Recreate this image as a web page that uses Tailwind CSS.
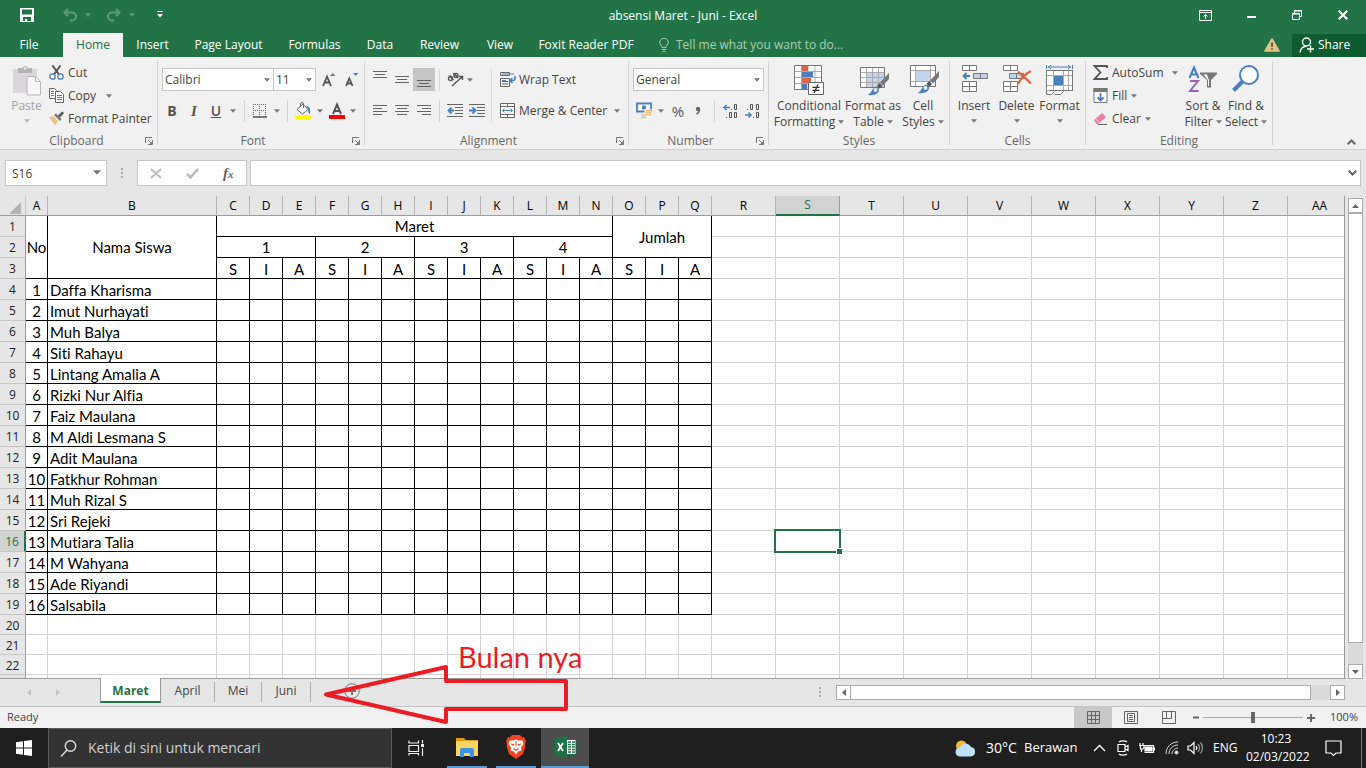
<!DOCTYPE html>
<html lang="id">
<head>
<meta charset="utf-8">
<title>absensi Maret - Juni - Excel</title>
<script src="https://cdn.jsdelivr.net/npm/@tailwindcss/browser@4"></script>
</head>
<body class="flex h-screen flex-col overflow-hidden bg-[#e6e6e6] font-['Open_Sans',sans-serif] text-xs text-[#444]">

<svg class="hidden" aria-hidden="true">
  <symbol id="dd" viewBox="0 0 7 4"><path d="M0 0h7L3.500 4z" fill="currentColor"/></symbol>
  <symbol id="launch" viewBox="0 0 8 8"><path d="M0.5 6V0.5H7M3 3l3.500 3.500M7.500 3v4.500H3" fill="none" stroke="#777"/><path d="M7.500 4v3.500H4z" fill="#777"/></symbol>
</svg>

<!-- Title bar -->
<header class="shrink-0 bg-[#227447] text-white">
  <div class="relative flex h-[33px] items-center justify-between">
    <div class="flex h-full items-center pl-5 pb-1">
      <button aria-label="Save" class="w-[14px]"><svg width="14" height="14" viewBox="0 0 14 14" fill="#fff"><path fill-rule="evenodd" d="M0 0h14v14H0zM2 1.500v5h10v-5zM3 9v4h2v-2h2v2h4V9z"/></svg></button>
      <button aria-label="Undo" class="ml-[29px]"><svg width="14" height="14" viewBox="0 0 14 14" fill="none" stroke="#5c9c79" stroke-width="2"><path d="M5 1L1.500 4.500 5 8M2 4.500h7a4 4 0 0 1 0 8H7"/></svg></button>
      <svg class="ml-2 text-[#5c9c79]" width="6" height="4"><use href="#dd"/></svg>
      <button aria-label="Redo" class="ml-4"><svg width="14" height="14" viewBox="0 0 14 14" fill="none" stroke="#5c9c79" stroke-width="2"><path d="M9 1l3.500 3.500L9 8M12 4.500H5a4 4 0 0 0 0 8h2"/></svg></button>
      <svg class="ml-2 text-[#5c9c79]" width="6" height="4"><use href="#dd"/></svg>
      <button aria-label="Customize Quick Access Toolbar" class="ml-[22px]"><svg width="6" height="7" viewBox="0 0 6 7" fill="#fff"><path d="M0 0h6v1H0zM0 3h6L3 6.500z"/></svg></button>
    </div>
    <h1 class="absolute inset-x-0 top-2 mx-auto w-40 text-center leading-4 whitespace-nowrap">absensi Maret - Juni - Excel</h1>
    <div class="relative flex h-full items-center pb-[3px]">
      <button aria-label="Ribbon Display Options" class="flex w-[46px] justify-center"><svg width="13" height="11" viewBox="0 0 13 11" fill="none" stroke="#fff"><path d="M.5.5h12v10H.5zM.5 2.500h12M6.500 9V4.500M4.500 6.500l2-2 2 2"/></svg></button>
      <button aria-label="Minimize" class="flex w-[46px] justify-center pt-[3px]"><svg width="9" height="2"><path d="M0 0h9v2H0z" fill="#fff"/></svg></button>
      <button aria-label="Restore" class="flex w-[46px] justify-center"><svg width="10" height="10" viewBox="0 0 10 10" fill="none" stroke="#fff"><path d="M.5 4h7v5.500h-7zM0 3.500h8M2.500 3V1h7v5.500H8M2 .5h8"/></svg></button>
      <button aria-label="Close" class="flex w-[46px] justify-center"><svg width="10" height="10" viewBox="0 0 10 10" stroke="#fff" stroke-width="2"><path d="M.7.7l8.600 8.600M9.300.7L.7 9.300"/></svg></button>
    </div>
  </div>
  <nav class="flex h-6 items-stretch">
    <button class="mr-[5px] w-[58px]">File</button>
    <button class="w-[60px] bg-[#f1f1f1] text-[#217346]">Home</button>
    <button class="w-[59px]">Insert</button>
    <button class="w-[93px]">Page Layout</button>
    <button class="w-[79px]">Formulas</button>
    <button class="w-[52px]">Data</button>
    <button class="w-[67px]">Review</button>
    <button class="w-[54px]">View</button>
    <button class="w-[118px] whitespace-nowrap">Foxit Reader PDF</button>
    <span class="ml-[14px] flex items-center"><svg width="10" height="14" viewBox="0 0 10 14" fill="none" stroke="#a9cdb9"><path d="M3 9.500C3 7.500.8 7 .8 4.500a4.200 4.200 0 0 1 8.400 0C9.200 7 7 7.500 7 9.500zM3 11.500h4M3.500 13.300h3"/></svg></span>
    <input aria-label="Tell me" placeholder="Tell me what you want to do..." class="ml-[7px] w-44 bg-transparent placeholder:text-[#a9cdb9] outline-none">
    <div class="ml-auto flex items-center">
      <svg class="mr-3" width="16" height="14" viewBox="0 0 16 14"><path d="M8 1L15 13H1z" fill="#e8c282" stroke="#e8c282" stroke-width="1.500" stroke-linejoin="round"/><path d="M7.200 4.500h1.600v4.500H7.200zM7.200 10.200h1.600v1.600H7.200z" fill="#444"/></svg>
      <button class="flex h-[23px] w-[74px] items-center gap-[3px] bg-[#0e5c2f] pl-[7px]"><svg width="16" height="16" viewBox="0 0 16 16" fill="none" stroke="#fff" stroke-width="1.400"><circle cx="7.500" cy="5" r="4"/><path d="M1 15.500C1.500 11 4.500 9.500 7.500 9.300M11.500 8.500v7M8 12h7"/></svg>Share</button>
    </div>
  </nav>
</header>

<!-- Ribbon -->
<section aria-label="Ribbon" class="relative flex h-[93px] shrink-0 border-b border-[#d2d0d0] bg-[#f1f1f1] pt-1 pb-1 leading-4">
  <!-- Clipboard -->
  <div class="flex w-[158px] flex-col justify-between border-r border-[#d4d4d4]">
    <div class="flex h-[69px] pl-[6px]">
      <button class="flex w-[38px] flex-col items-center pt-1 pl-[3px] text-[#a3a3a3]">
        <svg width="29" height="31" viewBox="0 0 29 31"><path d="M1 4h24v24H1z" fill="#dcd6da"/><path d="M6 3h4.500a2.600 2.600 0 0 1 5 0H20v5H6z" fill="#b3b1b2"/><circle cx="13" cy="3.500" r="1.200" fill="#f1f1f1"/><path d="M15 11.500h8.500l5 5V30H15z" fill="#f7f5f8" stroke="#b9b5ba"/><path d="M23.500 11.500v5h5" fill="none" stroke="#b9b5ba"/></svg>
        <span class="mt-[2px]">Paste</span>
        <svg class="mt-[5px] text-[#b5b5b5]" width="6" height="4"><use href="#dd"/></svg>
      </button>
      <div class="flex flex-col pl-[5px] whitespace-nowrap">
        <button class="flex h-[23px] items-center gap-[4px]"><svg width="15" height="15" viewBox="0 0 15 15" fill="none"><path d="M3.500.5l6.500 9M11.500.5L5 9.500" stroke="#555" stroke-width="2"/><circle cx="3.500" cy="11.500" r="2.700" stroke="#4a7fba" stroke-width="1.300"/><circle cx="11.500" cy="11.500" r="2.700" stroke="#4a7fba" stroke-width="1.300"/></svg>Cut</button>
        <button class="flex h-[23px] items-center gap-[4px]"><svg width="15" height="15" viewBox="0 0 15 15"><g fill="#fff" stroke="#666"><path d="M.5.5h5l2 2v8h-7z"/><path d="M6.500 3.500h5l3 3v8h-8z"/></g><path d="M2 3.500h3M2 5.500h3M2 7.500h3M8 7.500h5M8 9.500h5M8 11.500h5" stroke="#4a7fba"/></svg>Copy<svg class="ml-[6px] text-[#777]" width="6" height="4"><use href="#dd"/></svg></button>
        <button class="flex h-[23px] items-center gap-[4px]"><svg width="15" height="15" viewBox="0 0 15 15"><path d="M0 6l4-1 5 5-3 4.500z" fill="#edc285"/><path d="M5 4l6 6 1.500-2-5.500-5.500z" fill="#777"/><path d="M9 4.500l4-4L15 2l-4 4.500z" fill="#555"/></svg>Format Painter</button>
      </div>
    </div>
    <div class="flex items-center justify-center pr-1 leading-2 text-[#666]"><span class="ml-auto pl-2">Clipboard</span><button aria-label="Clipboard options" class="ml-auto"><svg width="8" height="8"><use href="#launch"/></svg></button></div>
  </div>
  <!-- Font -->
  <div class="flex w-[207px] flex-col justify-between border-r border-[#d4d4d4]">
    <div class="pt-[7px] pl-1">
      <div class="flex h-[23px]">
        <div class="relative w-[112px]"><select aria-label="Font" class="h-full w-full appearance-none border border-[#c6c6c6] bg-white pl-[2px] text-[#444]"><option>Calibri</option></select><svg class="absolute top-[10px] right-1 text-[#777]" width="6" height="4"><use href="#dd"/></svg></div>
        <div class="relative -ml-px w-[43px]"><select aria-label="Font size" class="h-full w-full appearance-none border border-[#c6c6c6] bg-white pl-[2px] text-[#444]"><option>11</option></select><svg class="absolute top-[10px] right-1 text-[#777]" width="6" height="4"><use href="#dd"/></svg></div>
        <button aria-label="Increase font size" class="ml-[6px] flex w-[14px] items-center"><svg width="14" height="15" viewBox="0 0 14 15"><path d="M1 14L5 4.500 9 14M2.500 10.500h5" fill="none" stroke="#555" stroke-width="1.800"/><path d="M8 4h5.500L10.700 1z" fill="#4a7fba"/></svg></button>
        <button aria-label="Decrease font size" class="ml-[9px] flex w-[14px] items-center"><svg width="14" height="15" viewBox="0 0 14 15"><path d="M1 14L4.300 6.500 7.600 14M2.200 11.500h4.200" fill="none" stroke="#555" stroke-width="1.800"/><path d="M8 1h5.500L10.700 4z" fill="#4a7fba"/></svg></button>
      </div>
      <div class="mt-2 flex h-[23px] items-center text-[#777]">
        <button class="w-[20px] text-sm font-bold text-[#555]">B</button>
        <button class="w-[24px] font-['Liberation_Serif',serif] text-[15px] font-bold text-[#555] italic">I</button>
        <button class="w-[20px] text-sm font-semibold text-[#555] underline">U</button>
        <svg class="ml-1" width="6" height="4"><use href="#dd"/></svg>
        <span class="mx-2 h-[22px] w-px bg-[#d4d4d4]"></span>
        <button aria-label="Borders"><svg width="14" height="14" viewBox="0 0 14 14"><path d="M0 .5h14M0 6.500h14M.5 0v13M6.500 0v13M12.500 0v13" fill="none" stroke="#666" stroke-dasharray="1 1"/><path d="M0 13h14" stroke="#555" stroke-width="1.500"/></svg></button>
        <svg class="ml-[7px]" width="6" height="4"><use href="#dd"/></svg>
        <span class="mx-[7px] h-[22px] w-px bg-[#d4d4d4]"></span>
        <button aria-label="Fill color"><svg width="17" height="17" viewBox="0 0 17 17"><path d="M2 7.500L8 2l5 5.500L7.500 12z" fill="#fff" stroke="#666"/><path d="M5.500 5V2a1.500 1.500 0 0 1 3 0v4" fill="none" stroke="#666"/><path d="M11 4c4 0 4.500 3 4 8-2-1-2-4-2-5z" fill="#4a7fba"/><path d="M0 13h16v4H0z" fill="#ff0"/></svg></button>
        <svg class="ml-[5px]" width="6" height="4"><use href="#dd"/></svg>
        <button aria-label="Font color" class="ml-[6px]"><svg width="16" height="17" viewBox="0 0 16 17"><path d="M4 12L8 2.500 12 12M5.500 9h5" fill="none" stroke="#555" stroke-width="2"/><path d="M0 13h16v4H0z" fill="red"/></svg></button>
        <svg class="ml-[5px]" width="6" height="4"><use href="#dd"/></svg>
      </div>
    </div>
    <div class="flex items-center pr-1 leading-2 text-[#666]"><span class="mx-auto pr-1">Font</span><button aria-label="Font options"><svg width="8" height="8"><use href="#launch"/></svg></button></div>
  </div>
  <!-- Alignment -->
  <div class="flex w-[264px] flex-col justify-between border-r border-[#d4d4d4]">
    <div class="flex pt-[7px] pl-1">
      <div class="w-[123px] border-r border-[#dcdcdc]">
        <div class="flex h-[23px] items-center">
          <button aria-label="Top align" class="flex h-full w-[22px] items-start justify-center pt-[3px]"><svg width="14" height="8" stroke="#666"><path d="M0 .5h14M2 3.500h10M0 6.500h14"/></svg></button>
          <button aria-label="Middle align" class="flex h-full w-[22px] items-center justify-center"><svg width="14" height="8" stroke="#666"><path d="M0 .5h14M2 3.500h10M0 6.500h14"/></svg></button>
          <button aria-label="Bottom align" class="flex h-full w-[22px] items-end justify-center bg-[#c5c5c5] pb-[3px]"><svg width="14" height="8" stroke="#666"><path d="M0 .5h14M2 3.500h10M0 6.500h14"/></svg></button>
          <span class="mx-1 h-[22px] w-px bg-[#d4d4d4]"></span>
          <button aria-label="Orientation" class="flex items-center gap-[3px] pl-[3px] text-[#777]"><svg width="17" height="15" viewBox="0 0 17 15" fill="none" stroke="#555" stroke-width="1.400"><circle cx="3.500" cy="6.500" r="2"/><path d="M2.500 3.500l4 4.500M6.500 1l4.500 5"/><circle cx="9" cy="3.500" r="2"/><path d="M5 14l10-9M12 4.500h3.500V8"/></svg><svg width="6" height="4"><use href="#dd"/></svg></button>
        </div>
        <div class="mt-2 flex h-[23px] items-center">
          <button aria-label="Align left" class="flex w-[22px] justify-center"><svg width="14" height="11" stroke="#666"><path d="M0 .5h14M0 3.500h9M0 6.500h14M0 9.500h9"/></svg></button>
          <button aria-label="Center" class="flex w-[22px] justify-center"><svg width="14" height="11" stroke="#666"><path d="M0 .5h14M2 3.500h10M0 6.500h14M2 9.500h10"/></svg></button>
          <button aria-label="Align right" class="flex w-[22px] justify-center"><svg width="14" height="11" stroke="#666"><path d="M0 .5h14M5 3.500h9M0 6.500h14M5 9.500h9"/></svg></button>
          <span class="mx-1 h-[22px] w-px bg-[#d4d4d4]"></span>
          <button aria-label="Decrease indent" class="flex w-[22px] justify-center"><svg width="16" height="14" fill="none" stroke="#666"><path d="M0 .5h16M8 3.500h8M8 6.500h8M8 9.500h8M0 12.500h16"/><path d="M7 6.500H1.500M4.500 3.500l-3 3 3 3" stroke="#4a7fba" stroke-width="1.800"/></svg></button>
          <button aria-label="Increase indent" class="flex w-[22px] justify-center"><svg width="16" height="14" fill="none" stroke="#666"><path d="M0 .5h16M8 3.500h8M8 6.500h8M8 9.500h8M0 12.500h16"/><path d="M0 6.500h6M3.500 3.500l3 3-3 3" stroke="#4a7fba" stroke-width="1.800"/></svg></button>
        </div>
      </div>
      <div class="pl-2 whitespace-nowrap">
        <button class="flex h-[23px] items-center gap-[3px]"><svg width="16" height="16" viewBox="0 0 16 16" fill="none" stroke="#666"><path d="M.5.5h9v3h-9zM.5 6.500h9v8h-9zM2 9.500h6M2 12h6"/><path d="M2 2h12M2 8.500h4" stroke="#4a7fba"/><path d="M15 4v2.500a2 2 0 0 1-2 2h-2.500M12.500 6l-2.500 2.500 2.500 2.500" stroke="#4a7fba" stroke-width="1.500"/></svg>Wrap Text</button>
        <button class="mt-2 flex h-[23px] items-center gap-[4px]"><svg width="15" height="15" viewBox="0 0 15 15" fill="#fff" stroke="#666"><path d="M.5.5h14v14H.5zM.5 3.500h14M.5 11.500h14M7.500.5v3M7.500 11.500v3"/><path d="M2.500 7.500h10M4.500 5.500l-2 2 2 2M10.500 5.500l2 2-2 2" fill="none" stroke="#4a7fba"/></svg>Merge &amp; Center<svg class="ml-[3px] text-[#777]" width="6" height="4"><use href="#dd"/></svg></button>
      </div>
    </div>
    <div class="flex items-center pr-1 leading-2 text-[#666]"><span class="mx-auto pr-1">Alignment</span><button aria-label="Alignment options"><svg width="8" height="8"><use href="#launch"/></svg></button></div>
  </div>
  <!-- Number -->
  <div class="flex w-[140px] flex-col justify-between border-r border-[#d4d4d4]">
    <div class="pt-[7px] pl-1">
      <div class="relative h-[23px] w-[131px]"><select aria-label="Number format" class="h-full w-full appearance-none border border-[#c6c6c6] bg-white pl-[2px] text-[#444]"><option>General</option></select><svg class="absolute top-[10px] right-1 text-[#777]" width="6" height="4"><use href="#dd"/></svg></div>
      <div class="mt-2 flex h-[23px] items-center pl-[3px] text-[#777]">
        <button aria-label="Accounting format"><svg width="17" height="17" viewBox="0 0 17 17"><path d="M1 1.500h14v8H1z" fill="#fff" stroke="#4a7fba" stroke-width="1.800"/><circle cx="8" cy="5.500" r="2.200" fill="#4a7fba"/><path d="M8.500 7h7v8h-4v2h-7v-5h4z" fill="#f1f1f1"/><path d="M10 8.500h5M10 10.500h5M10 12.500h5M5 13h5M5 15.500h5" stroke="#eabf80" stroke-width="1.600"/></svg></button>
        <svg class="ml-[5px]" width="6" height="4"><use href="#dd"/></svg>
        <button class="ml-[5px] w-[18px] text-[15px] text-[#555]">%</button>
        <button aria-label="Comma style" class="ml-[8px]"><svg width="6" height="9" viewBox="0 0 6 9"><circle cx="3" cy="3" r="2.200" fill="#666"/><path d="M4.500 3c0 3-1 4-3 5" fill="none" stroke="#666" stroke-width="1.500"/></svg></button>
        <span class="mr-2 ml-[13px] h-[22px] w-px bg-[#d4d4d4]"></span>
        <button aria-label="Increase decimal"><svg width="15" height="14" viewBox="0 0 15 14" fill="none" stroke="#555"><path d="M7 3.500H1M3.500 1L1 3.500 3.500 6" stroke="#4a7fba" stroke-width="1.500"/><path d="M8 5.500h1M11.500 .5h2v5h-2zM3 13.500h1M6.500 8.500h2v5h-2zM11.500 8.500h2v5h-2z"/></svg></button>
        <button aria-label="Decrease decimal" class="ml-[7px]"><svg width="15" height="14" viewBox="0 0 15 14" fill="none" stroke="#555"><path d="M0 11h6M3.500 8.500L6 11l-2.500 2.500" stroke="#4a7fba" stroke-width="1.500"/><path d="M2 5.500h1M5.500 .5h2v5h-2zM11.500 .5h2v5h-2zM8 13.500h1M11.500 8.500h2v5h-2z"/></svg></button>
      </div>
    </div>
    <div class="flex items-center pr-1 leading-2 text-[#666]"><span class="mx-auto pr-1">Number</span><button aria-label="Number options"><svg width="8" height="8"><use href="#launch"/></svg></button></div>
  </div>
  <!-- Styles -->
  <div class="flex w-[181px] flex-col justify-between border-r border-[#d4d4d4]">
    <div class="flex pt-1 pl-[5px] whitespace-nowrap">
      <button class="flex w-[70px] flex-col items-center">
        <svg class="mb-px" width="30" height="32" viewBox="0 0 30 32"><path d="M.5.5h27v24H.5z" fill="#fff"/><path d="M.5 6.500h27M.5 12.500h27M.5 18.500h27M7.500.5v24M14 .5v24M21 .5v24" stroke="#aaa"/><path d="M.5.5h27v24H.5z" fill="none" stroke="#777"/><path d="M8 1h6v5H8zM8 13h9v5H8z" fill="#dd6444"/><path d="M8 7h11v5H8zM8 19h5v5H8z" fill="#4a7fba"/><path d="M14.500 17.500h15v12h-15z" fill="#fff" stroke="#666"/><path d="M18.500 22.300h7M18.500 25.300h7M24 19.500l-4 8.500" stroke="#333" stroke-width="1.300"/></svg>
        <span>Conditional</span><span class="flex items-center gap-[3px]">Formatting<svg class="text-[#777]" width="6" height="4"><use href="#dd"/></svg></span>
      </button>
      <button class="flex w-[58px] flex-col items-center">
        <svg class="mb-px" width="32" height="32" viewBox="0 0 32 32"><path d="M3.500 2.500h24v20h-24z" fill="#fff"/><path d="M10 8h17v14H10z" fill="#c1d4ea"/><path d="M3.500 7.500h24M3.500 12.500h24M3.500 17.500h24M9.500 2.500v20M15.500 2.500v20M21.500 2.500v20" stroke="#aaa"/><path d="M3.500 2.500h24v20h-24z" fill="none" stroke="#777"/><path d="M32 8l-9 9.500 3 3L32 14z" fill="#777"/><path d="M22.500 18l-2.500 3 2.500 2.500 3-2.500z" fill="#555"/><path d="M10 30c5-1 4-6 8-8 3-1 5 2 3.500 5-2 3-7 3.500-11.500 3z" fill="#4a7fba"/><circle cx="18.500" cy="25" r="2" fill="#e8f0fa"/></svg>
        <span>Format as</span><span class="flex items-center gap-[3px]">Table<svg class="text-[#777]" width="6" height="4"><use href="#dd"/></svg></span>
      </button>
      <button class="flex w-[42px] flex-col items-center">
        <svg class="mb-px" width="32" height="32" viewBox="0 0 32 32"><path d="M3.500.5h25v21h-25z" fill="#fff"/><path d="M3.500 5.500h25M3.500 16.500h25M8.500.5v21M23.500.5v21" stroke="#aaa"/><path d="M9 6h14v10H9z" fill="#c1d4ea"/><path d="M3.500.5h25v21h-25z" fill="none" stroke="#777"/><path d="M32 6l-9 9.500 3 3L32 12z" fill="#777"/><path d="M22 16l-2.500 3 2.500 2.500 3-2.500z" fill="#555"/><path d="M10 28c5-1 4-6 8-8 3-1 5 2 3.500 5-2 3-7 3.500-11.500 3z" fill="#4a7fba"/><circle cx="18.500" cy="23" r="2" fill="#e8f0fa"/></svg>
        <span>Cell</span><span class="flex items-center gap-[3px]">Styles<svg class="text-[#777]" width="6" height="4"><use href="#dd"/></svg></span>
      </button>
    </div>
    <span class="text-center leading-2 text-[#666]">Styles</span>
  </div>
  <!-- Cells -->
  <div class="flex w-[136px] flex-col justify-between border-r border-[#d4d4d4]">
    <div class="flex pt-1 pl-[3px]">
      <button class="flex w-[42px] flex-col items-center">
        <svg class="mb-px" width="27" height="32" viewBox="0 0 27 32" fill="#fff" stroke="#777"><path d="M1.500.5h14v5h-14zM8.500.5v5M1.500 16.500h14v10h-14zM8.500 16.500v10M1.500 21.500h14"/><path d="M12.500 8.500h14v5h-14zM19.500 8.500v5" fill="#c1d4ea"/><path d="M9 11H2.500M5.500 8l-3 3 3 3" fill="none" stroke="#4a7fba" stroke-width="1.800"/></svg>
        <span>Insert</span><svg class="mt-[5px] text-[#777]" width="6" height="4"><use href="#dd"/></svg>
      </button>
      <button class="flex w-[43px] flex-col items-center">
        <svg class="mb-px" width="30" height="32" viewBox="0 0 30 32" fill="#fff" stroke="#777"><path d="M1.500.5h14v5h-14zM8.500.5v5M1.500 16.500h14v10h-14zM8.500 16.500v10M1.500 21.500h14"/><path d="M7.500 8.500h14v5h-14zM14.500 8.500v5" fill="#c1d4ea"/><path d="M16 6.500c4 4 8 7 13 12M29 6c-6 3-10 7-13 13" fill="none" stroke="#dd6444" stroke-width="2.200"/></svg>
        <span>Delete</span><svg class="mt-[5px] text-[#777]" width="6" height="4"><use href="#dd"/></svg>
      </button>
      <button class="flex w-[43px] flex-col items-center">
        <svg class="mb-px" width="30" height="32" viewBox="0 0 30 32" fill="none" stroke="#777"><path d="M1.500 5.500h26v20h-26z" fill="#fff"/><path d="M1.500 10.500h26M1.500 20.500h26M8.500 5.500v20M18.500 5.500v20M23.500 5.500v20" stroke="#aaa"/><path d="M1.500 5.500h26v20h-26z"/><path d="M9 11h9v9H9z" fill="#4a7fba" stroke="none"/><path d="M1.500 25.500v4h5l3-3M9.500 29.500h6l3-3" fill="#fff"/><path d="M1.500 0v4M27.500 0v4M3 2h23M6 0L3.500 2 6 4M23 0l2.500 2L23 4" stroke="#4a7fba"/></svg>
        <span>Format</span><svg class="mt-[5px] text-[#777]" width="6" height="4"><use href="#dd"/></svg>
      </button>
    </div>
    <span class="text-center leading-2 text-[#666]">Cells</span>
  </div>
  <!-- Editing -->
  <div class="flex w-[187px] flex-col justify-between border-r border-[#d4d4d4]">
    <div class="flex h-[69px] pl-[7px] whitespace-nowrap">
      <div class="flex w-[89px] flex-col">
        <button class="flex h-[23px] items-center gap-[4px]"><svg width="15" height="15" viewBox="0 0 15 15" fill="none" stroke="#555" stroke-width="1.800"><path d="M14 3V1H1.500l6 6.500-6 6.500H14v-2"/></svg>AutoSum<svg class="ml-1 text-[#777]" width="6" height="4"><use href="#dd"/></svg></button>
        <button class="flex h-[23px] items-center gap-[4px]"><svg width="15" height="15" viewBox="0 0 15 15"><path d="M1 .5h13v14H1z" fill="#fff" stroke="#777"/><path d="M.5 0h14v4H.5z" fill="#777"/><path d="M7.500 5v7.500M4.500 9.500l3 3 3-3" fill="none" stroke="#4a7fba" stroke-width="1.800"/></svg>Fill<svg class="text-[#777]" width="6" height="4"><use href="#dd"/></svg></button>
        <button class="flex h-[23px] items-center gap-[4px]"><svg width="15" height="14" viewBox="0 0 15 14"><path d="M1 8l8-7 4 4-7.500 7H3.500z" fill="#e8829a"/><path d="M2.500 6.500l4.500 5" stroke="#f6d5dc"/><path d="M5 12.500h9" stroke="#666"/></svg>Clear<svg class="text-[#777]" width="6" height="4"><use href="#dd"/></svg></button>
      </div>
      <button class="flex w-[42px] flex-col items-center pt-1">
        <svg class="mb-px" width="30" height="32" viewBox="0 0 30 32" fill="none"><path d="M1.500 13L6 2.500 10.500 13M3 9.500h6" stroke="#4a7fba" stroke-width="2"/><path d="M2 16h8L2 26h8.500" stroke="#9a63b5" stroke-width="2"/><path d="M12 7.500h17v1.500l-6 6v7.500h-4V15L12 9z" fill="#777"/><path d="M15.500 9.500h3.500l2 5.500v6h-1v-6z" fill="#fff"/></svg>
        <span>Sort &amp;</span><span class="flex items-center gap-[3px]">Filter<svg class="text-[#777]" width="6" height="4"><use href="#dd"/></svg></span>
      </button>
      <button class="flex w-[44px] flex-col items-center pt-1">
        <svg class="mb-px" width="28" height="32" viewBox="0 0 28 32"><path d="M11 16L1.500 25.500" stroke="#4a7fba" stroke-width="4"/><circle cx="17" cy="10" r="9" fill="#fff" stroke="#4a7fba" stroke-width="2"/></svg>
        <span>Find &amp;</span><span class="flex items-center gap-[3px]">Select<svg class="text-[#777]" width="6" height="4"><use href="#dd"/></svg></span>
      </button>
    </div>
    <span class="text-center leading-2 text-[#666]">Editing</span>
  </div>
  <button aria-label="Collapse the Ribbon" class="mt-auto mr-[10px] ml-auto"><svg width="9" height="6" fill="none" stroke="#666" stroke-width="2"><path d="M.7 5.300L4.500 1.500l3.800 3.800"/></svg></button>
</section>

<!-- Formula bar -->
<section aria-label="Formula bar" class="flex h-[46px] shrink-0 items-start px-[5px] pt-[10px]">
  <div class="relative h-[26px] w-[102px]"><input aria-label="Name Box" value="S16" class="h-full w-full border border-[#c6c6c6] bg-white pl-[6px]"><svg class="absolute top-[10px] right-[6px] text-[#777]" width="8" height="5"><use href="#dd"/></svg></div>
  <svg class="mt-2 ml-[14px]" width="2" height="11" fill="#aaa"><path d="M0 0h2v2H0zM0 4h2v2H0zM0 8h2v2H0z"/></svg>
  <div class="ml-[14px] flex h-[26px] w-[110px] items-center border border-[#c6c6c6] bg-white pl-3">
    <button aria-label="Cancel"><svg width="12" height="11" stroke="#bbb" stroke-width="1.800"><path d="M1 1l10 9M11 1L1 10"/></svg></button>
    <button aria-label="Enter" class="ml-6"><svg width="13" height="11" fill="none" stroke="#bbb" stroke-width="2.500"><path d="M1 6l3.500 3.500L12 1"/></svg></button>
    <button class="ml-6 font-['Liberation_Serif',serif] text-[15px] leading-4 font-bold text-[#666] italic">f<span class="text-[11px]">x</span></button>
  </div>
  <div class="relative ml-[3px] h-[26px] flex-1"><input aria-label="Formula" class="h-full w-full border border-[#c6c6c6] bg-white px-2"><svg class="absolute top-[10px] right-1" width="9" height="6" fill="none" stroke="#666" stroke-width="2"><path d="M.7.7l3.800 3.800L8.300.7"/></svg></div>
</section>

<!-- Sheet -->
<main class="flex min-h-0 flex-1">
  <div class="min-w-0 flex-1 overflow-hidden border-r border-[#9b9b9b]">
    <div class="h-full bg-white">
      <table class="w-[1352px] table-fixed border-separate border-spacing-0 bg-white text-center">
        <colgroup id="cols"></colgroup>
        <thead><tr id="head"></tr></thead>
        <tbody id="rows" class="font-[Lato,sans-serif] text-[15px] text-black [font-variant-ligatures:none]"></tbody>
      </table>
    </div>
  </div>
  <div class="flex w-[21px] flex-col items-start pt-[2px] pl-[3px]">
    <button aria-label="Scroll up" class="flex h-[15px] w-[15px] items-center justify-center border border-[#ababab] bg-white text-[#666]"><svg class="rotate-180" width="7" height="4"><use href="#dd"/></svg></button>
    <div class="flex w-[15px] flex-1 flex-col bg-[#dadada]"><div class="flex-1 border border-[#ababab] bg-white"></div><div class="h-[21px]"></div></div>
    <button aria-label="Scroll down" class="-mb-px flex h-[15px] w-[15px] items-center justify-center border border-[#ababab] bg-white text-[#666]"><svg width="7" height="4"><use href="#dd"/></svg></button>
  </div>
</main>

<!-- Sheet tabs -->
<section aria-label="Sheet tabs" class="relative flex h-[29px] shrink-0 border-b border-[#c6c6c6]">
  <div class="absolute top-0 right-5 left-0 h-px bg-[#9b9b9b]"></div>
  <div class="flex w-[100px] items-center gap-[25px] pl-[27px]">
    <svg width="4" height="7"><path d="M4 0v7L0 3.500z" fill="#c3c3c3"/></svg>
    <svg width="4" height="7"><path d="M0 0v7l4-3.500z" fill="#c3c3c3"/></svg>
  </div>
  <div class="relative flex h-[25px]">
    <button class="w-[61px] border-x border-b-2 border-x-[#9b9b9b] border-b-[#217346] bg-white pt-[2px] font-bold text-[#217346]">Maret</button>
    <button class="w-[53px] pt-px">April</button><span class="mt-1 h-5 w-px bg-[#ababab]"></span>
    <button class="w-[46px] pt-px">Mei</button><span class="mt-1 h-5 w-px bg-[#ababab]"></span>
    <button class="w-[48px] pt-px">Juni</button><span class="mt-1 h-5 w-px bg-[#ababab]"></span>
    <button aria-label="New sheet" class="ml-[33px] pt-px"><svg width="16" height="16" viewBox="0 0 16 16" fill="none" stroke="#777"><circle cx="8" cy="8" r="7.300"/><path d="M8 4v8M4 8h8" stroke-width="2"/></svg></button>
  </div>
  <div class="ml-auto flex items-start pt-[7px] pr-[21px]">
    <svg class="mt-[2px] mr-[15px]" width="2" height="11" fill="#aaa"><path d="M0 0h2v2H0zM0 4h2v2H0zM0 8h2v2H0z"/></svg>
    <button aria-label="Scroll left" class="flex h-[15px] w-[15px] items-center justify-center border border-[#ababab] bg-white"><svg width="4" height="7"><path d="M4 0v7L0 3.500z" fill="#666"/></svg></button>
    <div class="flex h-[15px] w-[479px] bg-[#dadada]"><div class="-ml-px w-[461px] border border-[#ababab] bg-white"></div></div>
    <button aria-label="Scroll right" class="flex h-[15px] w-[15px] items-center justify-center border border-[#ababab] bg-white"><svg width="4" height="7"><path d="M0 0v7l4-3.500z" fill="#666"/></svg></button>
  </div>
  <!-- Red annotation over the sheet tabs -->
  <svg class="absolute -top-[18px] left-[320px]" width="252" height="68" fill="none" stroke="#ed1c24" stroke-width="4" stroke-linejoin="round"><path d="M6 34.500L126 7v14h120v28H126v13z"/></svg>
  <p class="absolute -top-[37px] left-[458px] font-[Lato,sans-serif] text-[29px] leading-8 whitespace-nowrap text-[#ed1c24]">Bulan nya</p>
</section>

<!-- Status bar -->
<section aria-label="Status bar" class="flex h-[21px] shrink-0 items-center bg-[#f1f1f1] pl-[7px] text-[11px]">
  <span>Ready</span>
  <button aria-label="Normal" class="ml-auto flex h-full w-[38px] items-center justify-center bg-[#c8c8c8]"><svg width="13" height="13" fill="none" stroke="#666"><path d="M.5.5h12v12H.5zM.5 4.500h12M.5 8.500h12M4.500.5v12M8.500.5v12"/></svg></button>
  <button aria-label="Page Layout" class="flex w-[38px] justify-center"><svg width="14" height="13" fill="none" stroke="#666"><path d="M.5.5h13v12H.5zM3.500 2.500h7v8h-7zM5 4.500h4M5 6.500h4M5 8.500h4"/></svg></button>
  <button aria-label="Page Break Preview" class="flex w-[38px] justify-center"><svg width="14" height="13" fill="none" stroke="#666"><path d="M.5.5h13v12H.5zM4.500.5v7M9.500.5v7M.5 7.500h9"/></svg></button>
  <button aria-label="Zoom out" class="ml-[5px]"><svg width="6" height="7"><path d="M0 2.500h6v2H0z" fill="#666"/></svg></button>
  <div class="ml-1 flex h-3 w-[100px] items-center justify-center bg-[linear-gradient(#a9a9a9,#a9a9a9)] bg-[length:100%_1px] bg-center bg-no-repeat"><span class="h-[11px] w-1 bg-[#666]"></span></div>
  <button aria-label="Zoom in" class="ml-1"><svg width="8" height="8"><path d="M0 3h8v2H0zM3 0h2v8H3z" fill="#666"/></svg></button>
  <span class="w-[51px] pr-2 text-right">100%</span>
</section>

<!-- Windows taskbar -->
<footer class="flex h-10 shrink-0 bg-[#1f1f1f] text-white">
  <button aria-label="Start" class="flex w-12 items-center justify-center"><svg width="16" height="16" fill="#fff"><path d="M0 2.300L7 1.300v6.200H0zM8 1.100L16 0v7.500H8zM0 8.500h7v6.200L0 13.700zM8 8.500h8V16l-8-1.100z"/></svg></button>
  <div class="flex w-[344px] items-center border border-[#5a5a5a] bg-[#333] pl-[11px]">
    <svg width="17" height="17" fill="none" stroke="#ddd" stroke-width="1.400"><circle cx="10.500" cy="6" r="5.200"/><path d="M7 10L1 16.500"/></svg>
    <input aria-label="Cari" placeholder="Ketik di sini untuk mencari" class="ml-[11px] w-72 bg-transparent text-sm placeholder:text-[#d0d0d0] outline-none">
  </div>
  <button aria-label="Task View" class="flex w-12 items-center justify-center"><svg width="17" height="16" fill="none" stroke="#eee" stroke-width="1.200"><path d="M1 .5v2.500h9.500V.5M1 5.500h9.500v6H1zM1 15.500V13.500h9.500v2M14.500 0v3.500M14.500 8v8"/><path d="M13 4h3v3h-3z" fill="#eee" stroke="none"/></svg></button>
  <button aria-label="File Explorer" class="ml-[7px] flex w-10 items-center justify-center border-b-2 border-[#5b9bd5]"><svg width="22" height="19" viewBox="0 0 22 19"><path d="M0 0h8l2 2h12v5H0z" fill="#dc9b12"/><path d="M0 3h22v15H0z" fill="#fcd462"/><path d="M4 18v-6a2 2 0 0 1 2-2h10a2 2 0 0 1 2 2v7h-4v-4H8v4H4z" fill="#3b93dc"/></svg></button>
  <button aria-label="Brave" class="ml-[9px] flex w-10 items-center justify-center border-b-2 border-[#5b9bd5]"><svg width="20" height="24" viewBox="0 0 20 24"><path d="M6 0h8l2 2.500 2-.5 2 4-1 3 .5 2-2.500 8-7 5-7-5L.5 11 1 9 0 6l2-4 2 .5z" fill="#f4431c"/><path d="M3.500 5.500l3.500 0 3-1 3 1 3.500 0 1 3.500-2.500 3.500 .5 3-3.500 1L10 19.500 8 16.500l-3.500-1 .5-3L2.500 9z" fill="#fff"/><path d="M4.500 8.500l4 .8-.5 1.200-2-.3zM15.500 8.500l-4 .8.500 1.200 2-.3zM7 12.500l3 2 3-2-1 2.500-2 .8-2-.8zM9.500 6h1v5h-1z" fill="#f4431c"/></svg></button>
  <button aria-label="Excel" class="ml-[5px] flex w-12 items-center justify-center border-b-2 border-[#5b9bd5] bg-[#4d4d4d]"><svg width="23" height="22" viewBox="0 0 23 22"><path d="M12 3.500h10v15H12z" fill="#fff" stroke="#1e7145"/><path d="M14 6h3M18 6h3M14 8.500h3M18 8.500h3M14 11h3M18 11h3M14 13.500h3M18 13.500h3M14 16h3M18 16h3" stroke="#1e7145" stroke-width="1.400"/><path d="M0 2.500L13 0v22L0 19.500z" fill="#1e7145"/><path d="M4 7l5 8M9 7l-5 8" stroke="#fff" stroke-width="1.800"/></svg></button>
  <div class="ml-auto flex items-center whitespace-nowrap">
    <svg width="21" height="17" viewBox="0 0 21 17"><circle cx="6.500" cy="6" r="5.500" fill="#f7b733"/><path d="M5 16.500a4.500 4.500 0 0 1 0-9A6 6 0 0 1 16 7a4.800 4.800 0 0 1 0 9.500z" fill="#bfe0f9"/></svg>
    <span class="ml-[10px] w-[38px] text-sm">30°C</span>
    <span class="w-[69px] text-[13px]">Berawan</span>
    <button aria-label="Show hidden icons" class="w-[24px]"><svg width="13" height="8" fill="none" stroke="#fff" stroke-width="1.300"><path d="M1 7l5.500-5.500L12 7"/></svg></button>
    <svg width="12" height="16" fill="none" stroke="#fff" stroke-width="1.200"><path d="M2 2c2-1.500 6-1.500 8 0M2 14c2 1.500 6 1.500 8 0M1 4.500h7v7H1zM8 7l3-1.500v5L8 9z"/></svg>
    <svg class="ml-[10px]" width="16" height="12" fill="none" stroke="#fff" stroke-width="1.200"><path d="M4.500 3.500h10v7h-9M15.500 5.500v3M1 1v2M4 1v2M0 3.500h5v2l-1 1.500H1.500V4M2.500 7v3"/><path d="M6 5h7v4H6z" fill="#fff"/></svg>
    <svg class="ml-[10px]" width="14" height="14" fill="none" stroke="#ddd"><path d="M1 13C1 6 6 1 13 1M4 13c0-5 4-9 9-9M7 13c0-3 3-6 6-6"/><circle cx="11.500" cy="11.500" r="1.500" fill="#fff"/></svg>
    <svg class="ml-[8px]" width="17" height="14" fill="none" stroke="#fff" stroke-width="1.200"><path d="M1 5h2.500L7 1.500v11L3.500 9H1zM9 5c.8 1 .8 3 0 4"/><path d="M11 3c2 2 2 6 0 8M13.500 1.500c2.500 3 2.500 8 0 11" stroke="#999"/></svg>
    <span class="ml-[9px] w-[33px]">ENG</span>
    <time class="w-[60px] text-center text-xs leading-[18px]">10:23<br>02/03/2022</time>
    <button aria-label="Notifications" class="ml-[19px]"><svg width="17" height="17" fill="none" stroke="#fff" stroke-width="1.200"><path d="M1 1h15v12h-5l-2.500 2.500L6 13H1z"/></svg></button>
    <span class="mr-1 ml-[19px] h-10 w-px bg-[#777]"></span>
  </div>
</footer>

<script>
const names = ["Daffa Kharisma","Imut Nurhayati","Muh Balya","Siti Rahayu","Lintang Amalia A","Rizki Nur Alfia","Faiz Maulana","M Aldi Lesmana S","Adit Maulana","Fatkhur Rohman","Muh Rizal S","Sri Rejeki","Mutiara Talia","M Wahyana","Ade Riyandi","Salsabila"];
const letters = [..."ABCDEFGHIJKLMNOPQRSTUVWXYZ", "AA"];
const selCol = "S", selRow = 16;

const narrow = '<col class="w-[33px]">', wide = '<col class="w-[64px]">';
document.getElementById("cols").innerHTML = '<col class="w-[26px]"><col class="w-[22px]"><col class="w-[169px]">' + narrow.repeat(15) + wide.repeat(10);

document.getElementById("head").innerHTML =
  '<th class="h-5 border-r border-b border-r-[#c6c6c6] border-b-[#9b9b9b] bg-[#e6e6e6] p-0" aria-label="Select all"><svg class="ml-auto mr-1 mt-1" width="12" height="12"><path d="M12 0v12H0z" fill="#b4b4b4"/></svg></th>' +
  letters.map(l => l === selCol
    ? `<th class="h-5 border-r border-b-2 border-r-[#9b9b9b] border-b-[#217346] bg-[#d2d2d2] p-0 leading-[18px] font-normal text-[#217346]">${l}</th>`
    : `<th class="h-5 border-r border-b border-r-[#b4b4b4] border-b-[#9b9b9b] bg-[#e6e6e6] p-0 leading-[19px] font-normal text-black">${l}</th>`).join("");

const ink = (text, attrs = "") => `<td ${attrs} class="border-r border-b border-black p-0 leading-5">${text}</td>`;
const inkLow = text => `<td class="border-r border-b border-black p-0 pt-[2px] leading-[18px]">${text}</td>`;
const blank = '<td class="border-r border-b border-[#d4d4d4] p-0"></td>';
const selected = '<td class="relative border-r border-b border-[#d4d4d4] p-0"><div class="absolute -top-[2px] -left-[2px] h-6 w-[67px] border-2 border-[#217346]"></div><div class="absolute -right-[3px] -bottom-[3px] h-[6px] w-[6px] border-t border-l border-white bg-[#217346]"></div></td>';
const sia = ["S","I","A"];
let html = "";
for (let r = 1; r <= 23; r++) {
  const size = r < 20 ? "h-[21px]" : "h-5";
  const label = r < 23 ? r : "";
  html += `<tr class="${size}">`;
  html += r === selRow
    ? `<th class="border-r-2 border-b border-r-[#217346] border-b-[#c6c6c6] bg-[#d2d2d2] p-0 pt-[2px] font-['Open_Sans',sans-serif] text-xs font-normal text-[#217346]">${label}</th>`
    : `<th class="border-r border-b border-r-[#9b9b9b] border-b-[#c6c6c6] bg-[#e6e6e6] p-0 pt-[2px] font-['Open_Sans',sans-serif] text-xs font-normal text-[#222]">${label}</th>`;
  if (r === 1) html += ink("No", 'rowspan="3"') + ink("Nama Siswa", 'rowspan="3"') + ink("Maret", 'colspan="12"') + ink("Jumlah", 'rowspan="2" colspan="3"');
  else if (r === 2) html += [1,2,3,4].map(n => ink(n, 'colspan="3"')).join("");
  else if (r === 3) for (let g = 0; g < 5; g++) html += sia.map(inkLow).join("");
  else if (r < 20) html += inkLow(r - 3) + `<td class="border-r border-b border-black p-0 pt-[2px] pl-[2px] text-left leading-[18px] whitespace-nowrap">${names[r - 4]}</td>` + inkLow("").repeat(15);
  else html += blank.repeat(17);
  for (let c = 0; c < 10; c++) html += r === selRow && letters[17 + c] === selCol ? selected : blank;
  html += "</tr>";
}
document.getElementById("rows").innerHTML = html;
</script>
</body>
</html>
